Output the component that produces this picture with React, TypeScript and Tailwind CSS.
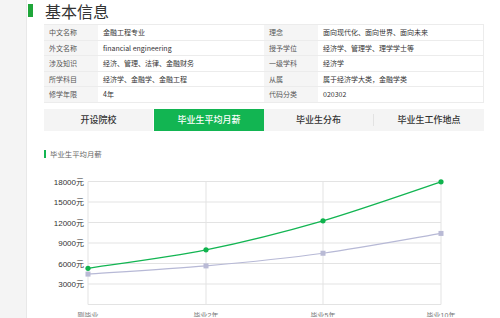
const FONT = "font-['Noto_Sans_CJK_SC','Liberation_Sans',sans-serif]";

const INFO: [string, string, string, string][] = [
  ['中文名称', '金融工程专业', '理念', '面向现代化、面向世界、面向未来'],
  ['外文名称', 'financial engineering', '授予学位', '经济学、管理学、理学学士等'],
  ['涉及知识', '经济、管理、法律、金融财务', '一级学科', '经济学'],
  ['所学科目', '经济学、金融学、金融工程', '从属', '属于经济学大类，金融学类'],
  ['修学年限', '4年', '代码分类', '020302'],
];

const TABS = ['开设院校', '毕业生平均月薪', '毕业生分布', '毕业生工作地点'];

// chart geometry (page coordinates, svg viewBox matches them)
const X0 = 88;
const X1 = 441;
const YB = 305.5;
const YT = 182.5;
const XS = [88, 206, 323, 441];
const XL = ['刚毕业', '毕业2年', '毕业5年', '毕业10年'];
const TICKS = [3000, 6000, 9000, 12000, 15000, 18000];
const GREEN = [5300, 8000, 12250, 17950];
const GRAY = [4450, 5650, 7500, 10400];

function yOf(v: number) {
  return YB - (v / 18000) * (YB - YT);
}

function smoothPath(vals: number[]) {
  const pts = vals.map((v, i) => [XS[i], yOf(v)]);
  let d = `M${pts[0][0]},${pts[0][1]}`;
  for (let i = 0; i < pts.length - 1; i++) {
    const p0 = pts[i - 1] || pts[i];
    const p1 = pts[i];
    const p2 = pts[i + 1];
    const p3 = pts[i + 2] || p2;
    const t = 0.15;
    const c1x = p1[0] + (p2[0] - p0[0]) * t;
    const c1y = p1[1] + (p2[1] - p0[1]) * t;
    const c2x = p2[0] - (p3[0] - p1[0]) * t;
    const c2y = p2[1] - (p3[1] - p1[1]) * t;
    d += ` C${c1x},${c1y} ${c2x},${c2y} ${p2[0]},${p2[1]}`;
  }
  return d;
}

function SalaryChart() {
  return (
    <svg width={440} height={153} viewBox="45 165 440 153" className="block">
      {/* grid */}
      {[0, ...TICKS].map((t) => (
        <line key={t} x1={X0} x2={X1} y1={yOf(t)} y2={yOf(t)} stroke="#e3e3e3" strokeWidth={1} />
      ))}
      {XS.map((x) => (
        <line key={x} x1={x} x2={x} y1={YT} y2={YB} stroke="#e3e3e3" strokeWidth={1} />
      ))}

      {/* y labels */}
      {TICKS.map((t) => (
        <text
          key={t}
          x={84}
          y={yOf(t) + 3}
          textAnchor="end"
          fontSize={8}
          fill="#333"
          fontFamily="'Liberation Sans','Noto Sans CJK SC',sans-serif"
        >
          {t}元
        </text>
      ))}

      {/* x labels */}
      {XS.map((x, i) => (
        <text
          key={x}
          x={x}
          y={319}
          textAnchor="middle"
          fontSize={7}
          fill="#777"
          fontFamily="'Liberation Sans','Noto Sans CJK SC',sans-serif"
        >
          {XL[i]}
        </text>
      ))}

      {/* gray series */}
      <path d={smoothPath(GRAY)} fill="none" stroke="#b7b9d6" strokeWidth={1.2} />
      {GRAY.map((v, i) => (
        <rect key={i} x={XS[i] - 2.5} y={yOf(v) - 2.5} width={5} height={5} fill="#b9bad5" />
      ))}

      {/* green series */}
      <path d={smoothPath(GREEN)} fill="none" stroke="#12b552" strokeWidth={1.3} />
      {GREEN.map((v, i) => (
        <circle key={i} cx={XS[i]} cy={yOf(v)} r={2.6} fill="#0fb34d" />
      ))}
    </svg>
  );
}

export default function App() {
  return (
    <div className={`flex h-[318px] w-[500px] overflow-hidden bg-white ${FONT}`}>
      {/* left rail */}
      <div className="w-[27px] shrink-0 border-r border-[#e8e8e8] bg-[#f4f4f4]" />

      <div className="flex-1">
        {/* heading */}
        <div className="flex h-[24px] items-start">
          <div className="ml-px mt-[4px] h-[13px] w-[5px] bg-[#1fa63a]" />
          <h2 className="ml-[12px] mt-[1px] text-[16px] leading-[20px] text-[#333]">基本信息</h2>
        </div>

        {/* info table */}
        <div className="ml-[17px] w-[440px] border-t border-[#ececec]">
          {INFO.map((r) => (
            <div key={r[0]} className="flex h-[15.6px] border-b border-[#ececec] text-[7px] leading-[14.6px]">
              <div className="w-[54px] bg-[#f5f5f5] pl-[5px] text-[#555]">{r[0]}</div>
              <div className="w-[166px] pl-[5px] text-[#333]">{r[1]}</div>
              <div className="w-[54px] bg-[#f5f5f5] pl-[5px] text-[#555]">{r[2]}</div>
              <div className="flex-1 border-r border-[#ececec] pl-[5px] text-[#333]">{r[3]}</div>
            </div>
          ))}
        </div>

        {/* tabs */}
        <div className="ml-[17px] mt-[6px] flex h-[22px] w-[440px] text-[9px] font-medium">
          <div className="mr-px flex w-[109px] items-center justify-center bg-[#f4f4f4] text-[#333]">{TABS[0]}</div>
          <div className="flex w-[110px] items-center justify-center bg-[#12b552] text-white">{TABS[1]}</div>
          <div className="flex w-[109px] items-center justify-center bg-[#f4f4f4] text-[#333]">{TABS[2]}</div>
          <div className="flex flex-1 items-center bg-[#f4f4f4]">
            <div className="h-[12px] w-px bg-[#e2e2e2]" />
            <div className="flex-1 text-center text-[#333]">{TABS[3]}</div>
          </div>
        </div>

        {/* chart title */}
        <div className="ml-[17px] mt-[19px] flex h-[8px] items-center">
          <div className="h-[8px] w-[2px] bg-[#12b552]" />
          <span className="ml-[4px] text-[7.4px] leading-[8px] text-[#666]">毕业生平均月薪</span>
        </div>

        <div className="-ml-[27px] mt-[6px]">
          <div className="ml-[45px]">
            <SalaryChart />
          </div>
        </div>
      </div>
    </div>
  );
}
